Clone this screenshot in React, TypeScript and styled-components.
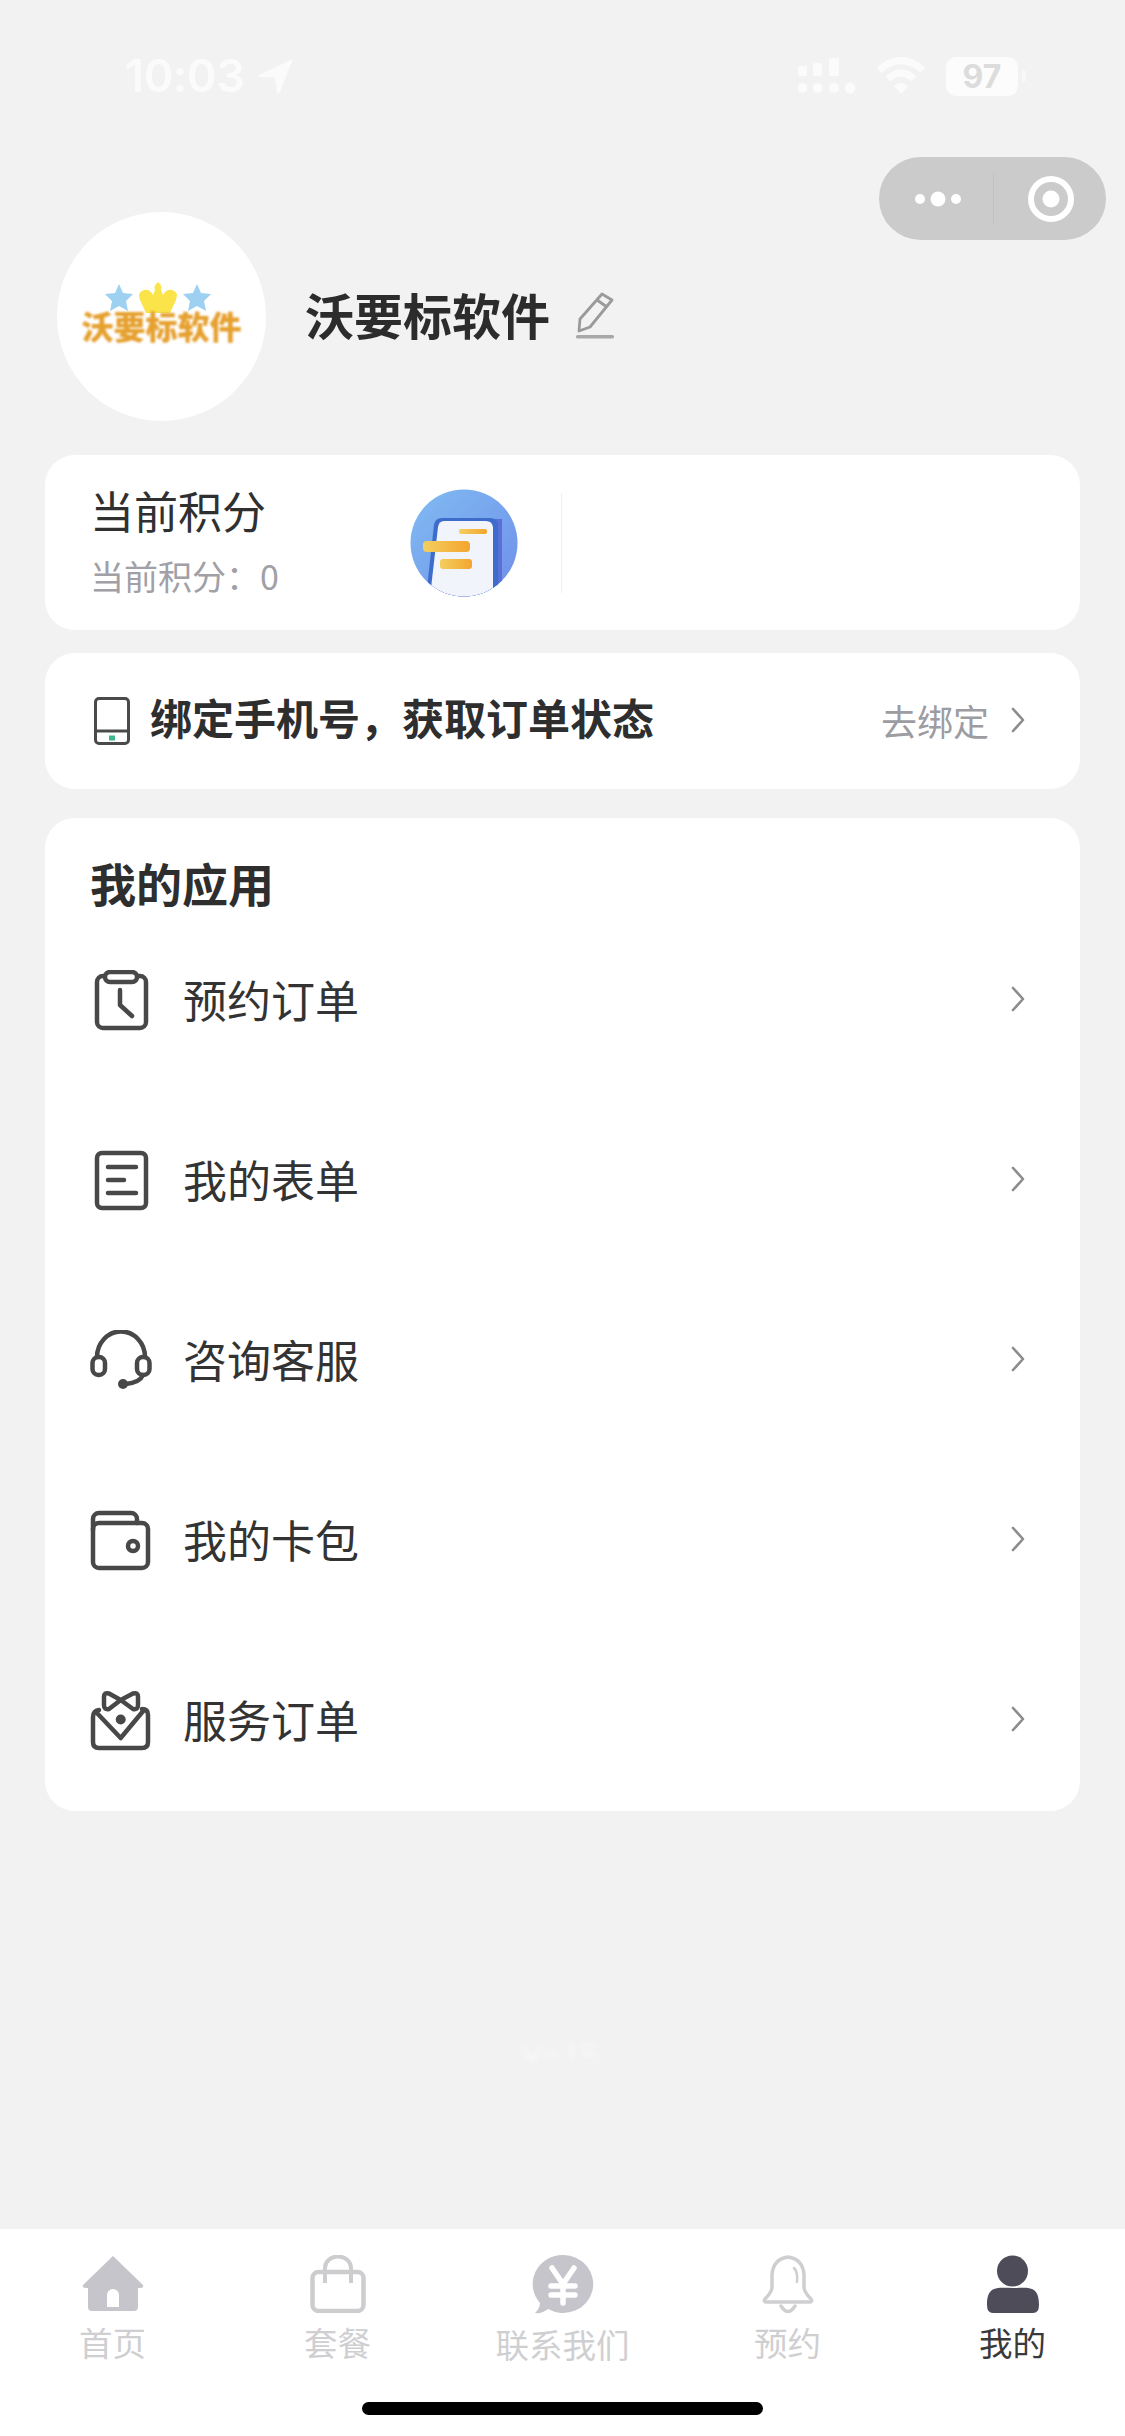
import React from "react";
import styled, { createGlobalStyle } from "styled-components";

const Global = createGlobalStyle`
  html, body { margin: 0; padding: 0; background: #f2f2f2; }
  * { box-sizing: border-box; }
  body { font-family: "Noto Sans CJK SC", "Noto Sans", sans-serif; color: #2e2e2e; }
`;

const Page = styled.div`
  width: 1125px;
  height: 2436px;
  display: flex;
  flex-direction: column;
  position: relative;
  overflow: hidden;
  background: #f2f2f2;
`;

const StatusBar = styled.div`
  height: 95px;
  padding: 57px 99px 0 125px;
  display: flex;
  align-items: center;
  justify-content: space-between;
  color: #fbfbfb;
`;
const StatusGroup = styled.div<{ $gap: number }>`
  display: flex;
  align-items: center;
  gap: ${(p) => p.$gap}px;
`;
const Time = styled.span`
  font-family: Inter, "Liberation Sans", sans-serif;
  font-size: 45px;
  line-height: 38px;
  font-weight: 600;
  letter-spacing: -0.4px;
`;
const Battery = styled.div`
  width: 72px;
  height: 39px;
  border-radius: 10px;
  background: #fcfcfc;
  color: #dcdcdc;
  font-family: Inter, "Liberation Sans", sans-serif;
  font-size: 32px;
  font-weight: 700;
  line-height: 39px;
  text-align: center;
`;
const BatteryTip = styled.div`
  width: 4px;
  height: 12px;
  border-radius: 0 3px 3px 0;
  background: #f8f8f8;
`;

const Capsule = styled.div`
  position: absolute;
  left: 879px;
  top: 157px;
  width: 227px;
  height: 83px;
  border-radius: 42px;
  background: #cbcbcb;
  display: flex;
  align-items: center;
  padding-left: 36px;
`;
const CapsuleDivider = styled.div`
  width: 1px;
  height: 50px;
  margin-left: 32px;
  margin-right: 33px;
  background: #c2c2c2;
`;

const Header = styled.div`
  margin: 117px 0 0 57px;
  display: flex;
  align-items: center;
`;
const Avatar = styled.div`
  width: 209px;
  height: 209px;
  border-radius: 50%;
  background: #fff;
  display: flex;
  flex-direction: column;
  align-items: center;
  padding-top: 68px;
  margin-right: 39px;
`;
const LogoMark = styled.svg`
  margin-right: 8px;
  filter: blur(0.5px);
`;
const LogoText = styled.span`
  font-size: 32px;
  line-height: 36px;
  font-weight: 900;
  color: #e6a02f;
  white-space: nowrap;
  margin-top: -9px;
  filter: blur(0.9px);
`;
const Name = styled.span`
  font-size: 49px;
  line-height: 60px;
  font-weight: 700;
  color: #2c2c2c;
  margin-right: 26px;
  padding-bottom: 5px;
`;
const Pencil = styled.svg`
  margin-bottom: 3px;
`;

const Card = styled.div<{ $top: number }>`
  margin: ${(p) => p.$top}px 45px 0;
  background: #fff;
  border-radius: 30px;
`;
const PointsCard = styled(Card)`
  height: 175px;
  display: flex;
  align-items: center;
  padding-left: 45px;
`;
const PointsText = styled.div`
  width: 320px;
  display: flex;
  flex-direction: column;
  gap: 26px;
  margin-top: -3px;
`;
const PointsTitle = styled.div`
  font-size: 44px;
  line-height: 44px;
  color: #303030;
`;
const PointsValue = styled.div`
  font-size: 34px;
  line-height: 36px;
  color: #a0a0a6;
`;
const PointsDivider = styled.div`
  width: 1px;
  height: 100px;
  margin-left: 43px;
  background: #efefef;
`;

const BindCard = styled(Card)`
  height: 136px;
  display: flex;
  align-items: center;
  padding: 0 54px 0 49px;
`;
const BindTitle = styled.span`
  margin-left: 20px;
  font-size: 42px;
  line-height: 50px;
  font-weight: 700;
  color: #2e2e2e;
  flex: 1;
  padding-bottom: 8px;
`;
const BindAction = styled.span`
  font-size: 36px;
  line-height: 44px;
  color: #9c9ca2;
  margin-right: 21px;
  padding-bottom: 3px;
`;

const AppsCard = styled(Card)`
  padding: 41px 54px 0 45px;
  height: 993px;
`;
const AppsTitle = styled.div`
  font-size: 46px;
  line-height: 46px;
  font-weight: 700;
  color: #2e2e2e;
  margin-bottom: 6px;
`;
const AppRow = styled.div`
  height: 180px;
  display: flex;
  align-items: center;
`;
const AppLabel = styled.span`
  flex: 1;
  margin-left: 31px;
  font-size: 44px;
  line-height: 50px;
  color: #333;
  padding-bottom: 5px;
`;
const ChevronMark = styled.svg<{ $lift: number }>`
  margin-bottom: ${(p) => p.$lift}px;
`;

const Watermark = styled.svg`
  display: block;
  margin: 229px 0 0 522px;
  filter: blur(2px);
  opacity: 0.8;
`;

const TabBar = styled.div`
  margin-top: auto;
  height: 207px;
  background: #fff;
  padding-top: 26px;
  display: flex;
  flex-direction: column;
  align-items: center;
`;
const Tabs = styled.div`
  width: 100%;
  display: grid;
  grid-template-columns: repeat(5, 1fr);
`;
const Tab = styled.div`
  display: flex;
  flex-direction: column;
  align-items: center;
`;
const TabLabel = styled.span<{ $active?: boolean }>`
  margin-top: 12px;
  font-size: 33.5px;
  line-height: 34px;
  color: ${(p) => (p.$active ? "#3a3a3a" : "#cfcfd2")};
`;
const HomeBar = styled.div`
  width: 401px;
  height: 13px;
  margin-top: 41px;
  border-radius: 7px;
  background: #000;
`;

const ink = { fill: "none", stroke: "#484848", strokeWidth: 4.5, strokeLinecap: "round", strokeLinejoin: "round" } as const;

const Chevron = ({ lift }: { lift: number }) => (
  <ChevronMark $lift={lift} width="16" height="26" viewBox="0 0 16 26">
    <path d="M3 2 L13 13 L3 24" fill="none" stroke="#8c8c90" strokeWidth="2.6" strokeLinecap="round" strokeLinejoin="round" />
  </ChevronMark>
);

const OrderIcon = () => (
  <svg width="62" height="62" viewBox="0 0 62 62">
    <rect x="7" y="6" width="49" height="52" rx="6" {...ink} />
    <rect x="15" y="2" width="32" height="10" rx="5" fill="#fff" stroke="#484848" strokeWidth="4.5" />
    <path d="M30 20 V35 L42 46" {...ink} />
  </svg>
);
const FormIcon = () => (
  <svg width="62" height="62" viewBox="0 0 62 62">
    <rect x="7" y="3" width="49" height="55" rx="5" {...ink} />
    <path d="M18 17 H46 M18 30 H34 M18 43 H46" {...ink} />
  </svg>
);
const ServiceIcon = () => (
  <svg width="62" height="62" viewBox="0 0 62 62">
    <path d="M7 27 A23.5 25 0 0 1 55 27" {...ink} />
    <rect x="2.5" y="27" width="12.5" height="18" rx="6" {...ink} />
    <rect x="47" y="27" width="12.5" height="18" rx="6" {...ink} />
    <path d="M53 45 C51 50 45 53 36 54" {...ink} />
    <circle cx="33" cy="54" r="5" fill="#484848" />
  </svg>
);
const WalletIcon = () => (
  <svg width="62" height="62" viewBox="0 0 62 62">
    <rect x="3" y="13" width="55" height="45" rx="6" {...ink} />
    <path d="M3 20 V9 A6 6 0 0 1 9 3 H41 A6 6 0 0 1 47 9 V13" {...ink} />
    <circle cx="43" cy="36" r="5" {...ink} />
  </svg>
);
const GiftIcon = () => (
  <svg width="62" height="62" viewBox="0 0 62 62">
    <path d="M9 20 Q3 21 3 27 V52 Q3 58 9 58 H52 Q58 58 58 52 V25 Q58 19 52 19" {...ink} />
    <path d="M6 22 L30.7 48 L54 20" {...ink} />
    <path d="M30.7 10 L19 3.5 Q14 2 14 7 V15 Q14 20 19 19 Z M30.7 10 L43 3.5 Q48 2 48 7 V15 Q48 20 43 19 Z" {...ink} />
    <circle cx="30.7" cy="29.5" r="5" fill="#484848" />
  </svg>
);

const apps = [
  { label: "预约订单", Icon: OrderIcon },
  { label: "我的表单", Icon: FormIcon },
  { label: "咨询客服", Icon: ServiceIcon },
  { label: "我的卡包", Icon: WalletIcon },
  { label: "服务订单", Icon: GiftIcon },
];

const HomeTab = () => (
  <svg width="62" height="58" viewBox="0 0 62 58">
    <path d="M31 1 L61 30 Q62 33 58 33 L56 33 V52 Q56 56 52 56 H10 Q6 56 6 52 V33 L4 33 Q0 33 1 30 Z" fill="#c5c5cb" />
    <path d="M25 52 V40 A6 6 0 0 1 37 40 V52 Z" fill="#fff" />
  </svg>
);
const BagTab = () => (
  <svg width="56" height="58" viewBox="0 0 56 58">
    <rect x="2.5" y="17" width="51" height="39" rx="6" fill="none" stroke="#cdcdd0" strokeWidth="4.5" />
    <path d="M15 28 V13 A13 11.5 0 0 1 41 13 V28" fill="none" stroke="#cdcdd0" strokeWidth="4" />
  </svg>
);
const YenTab = () => (
  <svg width="62" height="60" viewBox="0 0 62 60">
    <path d="M31 0 A30 29 0 1 1 16 54 Q10 59 3 58 Q8 53 8 48 A30 29 0 0 1 31 0 Z" fill="#c5c5cb" />
    <path d="M20 13 L31 29 L42 13 M31 29 V48 M19 31 H43 M19 40 H43" fill="none" stroke="#fff" strokeWidth="5.5" strokeLinecap="round" />
  </svg>
);
const BellTab = () => (
  <svg width="54" height="58" viewBox="0 0 54 58">
    <path d="M27 2 Q42 4 43 20 V33 Q44 38 50 44 Q52 47 48 47 H6 Q2 47 4 44 Q10 38 11 33 V20 Q12 4 27 2 Z" fill="none" stroke="#cfcfd2" strokeWidth="3.5" strokeLinejoin="round" />
    <path d="M33 13 Q37 17 36 27" fill="none" stroke="#cfcfd2" strokeWidth="2.5" strokeLinecap="round" />
    <path d="M20 51 Q27 62 34 51" fill="none" stroke="#cfcfd2" strokeWidth="3.5" strokeLinecap="round" />
  </svg>
);
const PersonTab = () => (
  <svg width="54" height="58" viewBox="0 0 54 58">
    <circle cx="26.5" cy="16" r="15.5" fill="#4f4c5a" />
    <path d="M1 50 C1 30 12 33 27 33 C42 33 53 30 53 50 Q53 58 47 58 H7 Q1 58 1 50 Z" fill="#4f4c5a" />
  </svg>
);

const tabs = [
  { label: "首页", Icon: HomeTab },
  { label: "套餐", Icon: BagTab },
  { label: "联系我们", Icon: YenTab },
  { label: "预约", Icon: BellTab },
  { label: "我的", Icon: PersonTab, active: true },
];

export default function App() {
  return (
    <Page>
      <Global />
      <StatusBar>
        <StatusGroup $gap={14}>
          <Time>10:03</Time>
          <svg width="36" height="36" viewBox="0 0 36 36">
            <path d="M35 1 L1 17 Q0 19 3 19 L17 20 L19 34 Q20 36 22 34 Z" fill="#fbfbfb" />
          </svg>
        </StatusGroup>
        <StatusGroup $gap={20}>
          <svg width="58" height="36" viewBox="0 0 58 36" fill="#fbfbfb">
            <rect x="0" y="8" width="9" height="10" rx="2" />
            <rect x="15" y="5" width="9" height="13" rx="2" />
            <rect x="31" y="0" width="10" height="18" rx="2" />
            <circle cx="4.5" cy="30" r="5" />
            <circle cx="19.5" cy="30" r="5" />
            <circle cx="36" cy="30" r="5" />
            <circle cx="52" cy="30" r="5.5" />
          </svg>
          <svg width="50" height="38" viewBox="0 0 50 38" fill="none" stroke="#fbfbfb" strokeWidth="7">
            <path d="M3 13 Q25 -6 47 13" />
            <path d="M12 22 Q25 10 38 22" />
            <path d="M25 37 L18 29 Q25 23 32 29 Z" fill="#fbfbfb" stroke="none" />
          </svg>
          <StatusGroup $gap={4}>
            <Battery>97</Battery>
            <BatteryTip />
          </StatusGroup>
        </StatusGroup>
      </StatusBar>

      <Capsule>
        <svg width="46" height="20" viewBox="0 0 46 20" fill="#fff">
          <circle cx="5" cy="10" r="5" />
          <circle cx="23" cy="10" r="7.5" />
          <circle cx="41" cy="10" r="5" />
        </svg>
        <CapsuleDivider />
        <svg width="48" height="48" viewBox="0 0 48 48">
          <circle cx="24" cy="24" r="20" fill="none" stroke="#fff" strokeWidth="6" />
          <circle cx="24" cy="24" r="8.5" fill="#fff" />
        </svg>
      </Capsule>

      <Header>
        <Avatar>
          <LogoMark width="110" height="36" viewBox="0 0 110 36">
            <path d="M16 4 L20 13 L30 14 L23 21 L25 31 L16 26 L7 31 L9 21 L2 14 L12 13 Z" fill="#9ed0f2" />
            <path d="M94 4 L98 13 L108 14 L101 21 L103 31 L94 26 L85 31 L87 21 L80 14 L90 13 Z" fill="#9ed0f2" />
            <path d="M43 33 L37 20 Q34 12 41 10 Q47 9 50 15 L52 10 Q50 6 55 2 Q60 6 58 10 L60 15 Q63 9 69 10 Q76 12 73 20 L67 33 Z" fill="#fbe44a" />
          </LogoMark>
          <LogoText>沃要标软件</LogoText>
        </Avatar>
        <Name>沃要标软件</Name>
        <Pencil width="40" height="48" viewBox="0 0 40 48">
          <path d="M26 3 L36 9 L14 36 L3 40 L4 28 Z M21 9 L31 16" fill="none" stroke="#9a9a9a" strokeWidth="2.8" strokeLinejoin="round" />
          <rect x="0" y="44" width="38" height="3.5" rx="1.5" fill="#a8a8a8" />
        </Pencil>
      </Header>

      <PointsCard $top={34}>
        <PointsText>
          <PointsTitle>当前积分</PointsTitle>
          <PointsValue>当前积分：0</PointsValue>
        </PointsText>
        <svg width="108" height="108" viewBox="0 0 108 108">
          <defs>
            <clipPath id="pc">
              <circle cx="54" cy="54" r="53.5" />
            </clipPath>
            <linearGradient id="pb" x1="0" y1="0" x2="1" y2="1">
              <stop offset="0" stopColor="#80bcf2" />
              <stop offset="1" stopColor="#6f8eea" />
            </linearGradient>
            <linearGradient id="py" x1="0" y1="0" x2="1" y2="0">
              <stop offset="0" stopColor="#f3cf5f" />
              <stop offset="1" stopColor="#f4a52e" />
            </linearGradient>
          </defs>
          <g clipPath="url(#pc)">
            <rect width="108" height="108" fill="url(#pb)" />
            <path d="M28 38 Q29 30 36 30 H92 V108 H28 Z" fill="#5a6fd8" />
            <path d="M24 36 Q25 29 32 29 H80 Q88 29 88 37 V108 H16 Z" fill="#3e6ccb" />
            <path d="M28 38 Q29 32 34 32 H76 Q82 32 83 38 V108 H20 Z" fill="#f1f4fb" />
            <rect x="13" y="52" width="47" height="11" rx="4" fill="url(#py)" />
            <rect x="30" y="70" width="32" height="10" rx="3" fill="url(#py)" />
            <rect x="49" y="40" width="28" height="5" rx="2" fill="url(#py)" />
          </g>
        </svg>
        <PointsDivider />
      </PointsCard>

      <BindCard $top={23}>
        <svg width="36" height="48" viewBox="0 0 36 48">
          <rect x="1.5" y="1.5" width="33" height="45" rx="3.5" fill="none" stroke="#4a4a4a" strokeWidth="3" />
          <path d="M2 34 H34" stroke="#4a4a4a" strokeWidth="3" />
          <rect x="15" y="38.5" width="6" height="5" fill="#3cb68f" />
        </svg>
        <BindTitle>绑定手机号，获取订单状态</BindTitle>
        <BindAction>去绑定</BindAction>
        <Chevron lift={2} />
      </BindCard>

      <AppsCard $top={29}>
        <AppsTitle>我的应用</AppsTitle>
        {apps.map(({ label, Icon }) => (
          <AppRow key={label}>
            <Icon />
            <AppLabel>{label}</AppLabel>
            <Chevron lift={5} />
          </AppRow>
        ))}
      </AppsCard>

      <Watermark width="80" height="24" viewBox="0 0 80 24">
        <path d="M2 8 L10 20 L18 8 M22 14 H36 M50 4 V20 M58 6 H72 M60 14 H74" fill="none" stroke="#fafafa" strokeWidth="3" />
      </Watermark>

      <TabBar>
        <Tabs>
          {tabs.map(({ label, Icon, active }) => (
            <Tab key={label}>
              <Icon />
              <TabLabel $active={active}>{label}</TabLabel>
            </Tab>
          ))}
        </Tabs>
        <HomeBar />
      </TabBar>
    </Page>
  );
}
